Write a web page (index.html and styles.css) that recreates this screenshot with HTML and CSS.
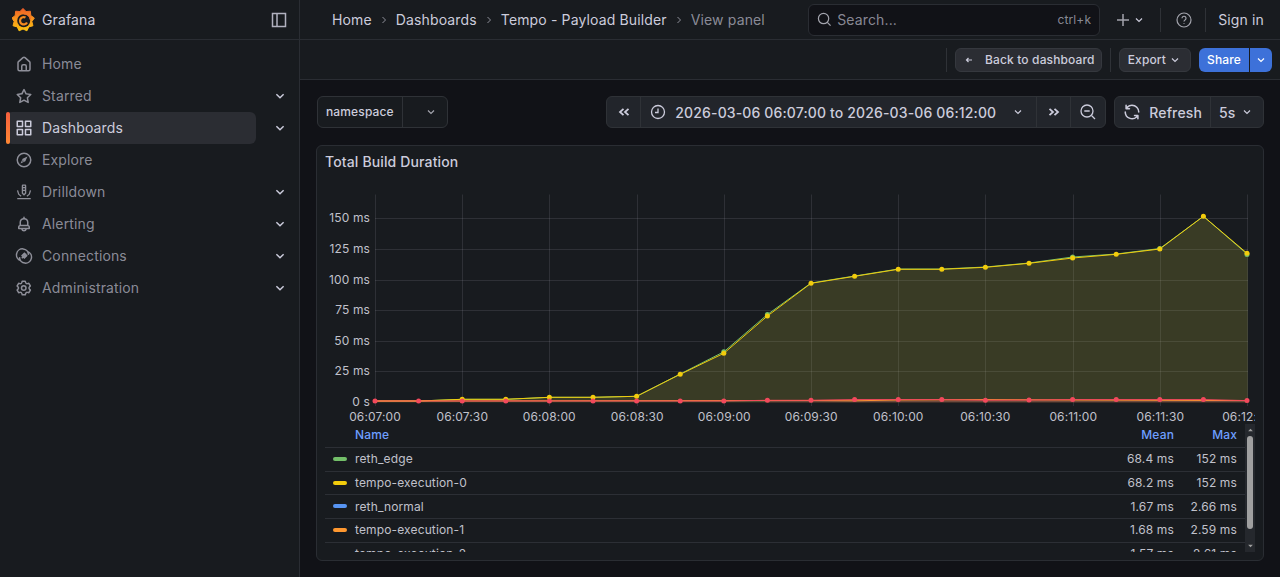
FILE: index.html
```html
<!DOCTYPE html>
<html lang="en">
<head>
<meta charset="utf-8">
<title>Tempo - Payload Builder - View panel</title>
<link rel="stylesheet" href="styles.css">
</head>
<body>
<div class="app">
  <aside class="sidebar">
    <div class="side-head">
      <svg class="logo" viewBox="0 0 24 24"><defs><linearGradient id="lg" gradientUnits="userSpaceOnUse" x1="11" y1="24" x2="11" y2="0"><stop offset="0" stop-color="#fcc60f"/><stop offset=".55" stop-color="#f7941d"/><stop offset="1" stop-color="#f05a28"/></linearGradient></defs>
        <polygon class="logo-gear" points="11,0.5 14.08,3.54 18.39,3.19 18.79,7.5 22.33,10 19.86,13.56 20.96,17.75 16.79,18.89 14.93,22.81 11,21 7.07,22.81 5.21,18.89 1.04,17.75 2.14,13.56 0,10 3.21,7.5 3.61,3.19 7.92,3.54"/>
        <circle class="logo-hole" cx="11.700" cy="12.700" r="6.500"/>
        <path class="logo-arc" d="M13.500 9.500A3.700 3.700 0 1 0 15 14.500"/>
        <path class="logo-curl" d="M11.500 5.800A7 7 0 0 1 18.500 11.500"/>
      </svg>
      <span class="brand">Grafana</span>
      <svg class="dock" viewBox="0 0 16 16"><path d="M1.500 1.500h13v13h-13zM6 1.500v13"/></svg>
    </div>
    <nav class="menu">
      <a class="item"><svg class="ico" viewBox="0 0 24 24"><path d="M20,8h0L14,2.74a3,3,0,0,0-4,0L4,8a3,3,0,0,0-1,2.26V19a3,3,0,0,0,3,3H18a3,3,0,0,0,3-3V10.25A3,3,0,0,0,20,8ZM14,20H10V15a1,1,0,0,1,1-1h2a1,1,0,0,1,1,1Zm5-1a1,1,0,0,1-1,1H16V15a3,3,0,0,0-3-3H11a3,3,0,0,0-3,3v5H6a1,1,0,0,1-1-1V10.25a1,1,0,0,1,.34-.75l6-5.25a1,1,0,0,1,1.32,0l6,5.25a1,1,0,0,1,.34.75Z"/></svg><span class="label">Home</span></a>
      <a class="item"><svg class="ico" viewBox="0 0 24 24"><path d="M22,9.67A1,1,0,0,0,21.14,9l-5.69-.83L12.9,3a1,1,0,0,0-1.8,0L8.55,8.16,2.86,9a1,1,0,0,0-.81.68,1,1,0,0,0,.25,1l4.13,4-1,5.68A1,1,0,0,0,6.9,21.44L12,18.77l5.1,2.67a.93.93,0,0,0,.46.12,1,1,0,0,0,.59-.19,1,1,0,0,0,.4-1l-1-5.68,4.13-4A1,1,0,0,0,22,9.67Zm-6.15,4a1,1,0,0,0-.29.88l.72,4.2-3.76-2a1.06,1.06,0,0,0-.94,0l-3.76,2,.72-4.2a1,1,0,0,0-.29-.88l-3-3,4.21-.61a1,1,0,0,0,.76-.55L12,5.7l1.88,3.82a1,1,0,0,0,.76.55l4.21.61Z"/></svg><span class="label">Starred</span><svg class="chev" viewBox="0 0 10 10"><path d="M2 3.500l3 3 3-3"/></svg></a>
      <a class="item active"><svg class="ico" viewBox="0 0 24 24"><path d="M10,13H3a1,1,0,0,0-1,1v7a1,1,0,0,0,1,1h7a1,1,0,0,0,1-1V14A1,1,0,0,0,10,13ZM9,20H4V15H9ZM21,2H14a1,1,0,0,0-1,1v7a1,1,0,0,0,1,1h7a1,1,0,0,0,1-1V3A1,1,0,0,0,21,2ZM20,9H15V4h5Zm1,4H14a1,1,0,0,0-1,1v7a1,1,0,0,0,1,1h7a1,1,0,0,0,1-1V14A1,1,0,0,0,21,13Zm-1,7H15V15h5ZM10,2H3A1,1,0,0,0,2,3v7a1,1,0,0,0,1,1h7a1,1,0,0,0,1-1V3A1,1,0,0,0,10,2ZM9,9H4V4H9Z"/></svg><span class="label">Dashboards</span><svg class="chev" viewBox="0 0 10 10"><path d="M2 3.500l3 3 3-3"/></svg></a>
      <a class="item"><svg class="ico" viewBox="0 0 24 24"><path fill-rule="evenodd" d="M12 2a10 10 0 1 0 0 20 10 10 0 0 0 0-20zm0 2a8 8 0 1 1 0 16 8 8 0 0 1 0-16zm4.700 3.300l-6.500 2.900-2.900 6.500 6.500-2.900zM10.500 12.300l1.200 1.200-2.100.9z"/></svg><span class="label">Explore</span></a>
      <a class="item"><svg class="ico" viewBox="0 0 24 24"><path d="M9 3.500a1.500 1.500 0 0 1 1.500-1.500h3A1.500 1.500 0 0 1 15 3.500V14l-3 3-3-3zm1.800 0v1.800h2.400V3.500zm0 3.500v2h2.400V7zm0 3.700v2.500l1.200 1.200 1.200-1.200v-2.500zM2.500 10l1.700-.5 1.500 5 3 2.500-1 1.300-3.500-3zM21.500 10l-1.700-.5-1.500 5-3 2.500 1 1.300 3.500-3zM3 20h18v1.800H3z"/></svg><span class="label">Drilldown</span><svg class="chev" viewBox="0 0 10 10"><path d="M2 3.500l3 3 3-3"/></svg></a>
      <a class="item"><svg class="ico" viewBox="0 0 24 24"><path d="M18,13.18V10a6,6,0,0,0-5-5.910V3a1,1,0,0,0-2,0V4.090A6,6,0,0,0,6,10v3.180A3,3,0,0,0,4,16v2a1,1,0,0,0,1,1H8.140a4,4,0,0,0,7.720,0H19a1,1,0,0,0,1-1V16A3,3,0,0,0,18,13.180ZM8,10a4,4,0,0,1,8,0v3H8Zm4,10a2,2,0,0,1-1.720-1h3.440A2,2,0,0,1,12,20Zm6-3H6V16a1,1,0,0,1,1-1H17a1,1,0,0,1,1,1Z"/></svg><span class="label">Alerting</span><svg class="chev" viewBox="0 0 10 10"><path d="M2 3.500l3 3 3-3"/></svg></a>
      <a class="item"><svg class="ico" viewBox="0 0 24 24"><path class="line" d="M18 10.500a8 8 0 1 0-10.500 7.600M6 13.500a8 8 0 1 0 10.500-7.600M9.500 11.500l3-3 3 3-3 3zM9 15l6-6"/></svg><span class="label">Connections</span><svg class="chev" viewBox="0 0 10 10"><path d="M2 3.500l3 3 3-3"/></svg></a>
      <a class="item"><svg class="ico" viewBox="0 0 24 24"><path d="M19.900,12.660a1,1,0,0,1,0-1.320L21.180,9.900a1,1,0,0,0,.12-1.170l-2-3.460a1,1,0,0,0-1.070-.48l-1.880.38a1,1,0,0,1-1.150-.66l-.61-1.830A1,1,0,0,0,13.640,2h-4a1,1,0,0,0-1,.68L8.080,4.510a1,1,0,0,1-1.150.66L5,4.790A1,1,0,0,0,4,5.270L2,8.730A1,1,0,0,0,2.100,9.900l1.270,1.440a1,1,0,0,1,0,1.320L2.100,14.100A1,1,0,0,0,2,15.270l2,3.460a1,1,0,0,0,1.070.48l1.880-.38a1,1,0,0,1,1.150.66l.61,1.830a1,1,0,0,0,1,.68h4a1,1,0,0,0,.95-.68l.61-1.830a1,1,0,0,1,1.150-.66l1.880.38a1,1,0,0,0,1.070-.48l2-3.460a1,1,0,0,0-.12-1.170ZM18.410,14l.8.900-1.280,2.220-1.180-.24a3,3,0,0,0-3.450,2L12.920,20H10.360L10,18.860a3,3,0,0,0-3.450-2l-1.180.24L4.070,14.890l.8-.9a3,3,0,0,0,0-4l-.8-.9L5.350,6.890l1.180.24a3,3,0,0,0,3.450-2L10.360,4h2.560l.38,1.140a3,3,0,0,0,3.450,2l1.180-.24,1.280,2.220-.8.9A3,3,0,0,0,18.410,14ZM11.640,8a4,4,0,1,0,4,4A4,4,0,0,0,11.640,8Zm0,6a2,2,0,1,1,2-2A2,2,0,0,1,11.640,14Z"/></svg><span class="label">Administration</span><svg class="chev" viewBox="0 0 10 10"><path d="M2 3.500l3 3 3-3"/></svg></a>
    </nav>
  </aside>
  <main class="main">
    <header class="topbar">
      <nav class="crumbs">
        <span>Home</span><svg class="sep" viewBox="0 0 10 10"><path d="M3.500 2l3 3-3 3"/></svg>
        <span>Dashboards</span><svg class="sep" viewBox="0 0 10 10"><path d="M3.500 2l3 3-3 3"/></svg>
        <span>Tempo - Payload Builder</span><svg class="sep" viewBox="0 0 10 10"><path d="M3.500 2l3 3-3 3"/></svg>
        <span class="dim">View panel</span>
      </nav>
      <div class="search">
        <svg class="s-ico" viewBox="0 0 16 16"><circle cx="7" cy="7" r="5.500"/><path d="M11 11l3.500 3.500"/></svg>
        <span class="s-text">Search...</span>
        <span class="s-key">ctrl+k</span>
      </div>
      <div class="plus"><svg class="plus-ico" viewBox="0 0 14 14"><path d="M7 1v12M1 7h12"/></svg><svg class="chev small" viewBox="0 0 10 10"><path d="M2 3.500l3 3 3-3"/></svg></div>
      <i class="vr"></i>
      <svg class="help" viewBox="0 0 16 16"><circle cx="8" cy="8" r="7"/><path d="M6 6.200a2 2 0 1 1 3 1.800c-.7.400-1 .8-1 1.600M8 11.300v.8"/></svg>
      <i class="vr"></i>
      <span class="signin">Sign in</span>
    </header>
    <div class="actionbar">
      <i class="vr bar"></i>
      <div class="btn back"><svg class="arrow" viewBox="0 0 10 10"><path d="M8 5H2.500M4.500 3l-2 2 2 2"/></svg>Back to dashboard</div>
      <i class="vr bar"></i>
      <div class="btn export">Export<svg class="chev small" viewBox="0 0 10 10"><path d="M2 3.500l3 3 3-3"/></svg></div>
      <div class="share"><span class="share-l">Share</span><span class="share-r"><svg class="chev small white" viewBox="0 0 10 10"><path d="M2 3.500l3 3 3-3"/></svg></span></div>
    </div>
    <section class="content">
      <div class="controls">
        <div class="var"><span class="var-l">namespace</span><span class="var-r"><svg class="chev small" viewBox="0 0 10 10"><path d="M2 3.500l3 3 3-3"/></svg></span></div>
        <div class="spacer"></div>
        <div class="group">
          <span class="seg arrows"><svg class="dbl" viewBox="0 0 12 12"><path d="M5.500 2.800L2 6l3.500 3.200M10.500 2.800L7 6l3.500 3.200"/></svg></span>
          <span class="seg range"><svg class="clock" viewBox="0 0 16 16"><circle cx="8" cy="8" r="6.500"/><path d="M8 4.500V8.500H5"/></svg><span class="range-t">2026-03-06 06:07:00 to 2026-03-06 06:12:00</span><svg class="chev small" viewBox="0 0 10 10"><path d="M2 3.500l3 3 3-3"/></svg></span>
          <span class="seg arrows"><svg class="dbl" viewBox="0 0 12 12"><path d="M1.500 2.800L5 6 1.500 9.200M6.500 2.800L10 6l-3.500 3.200"/></svg></span>
          <span class="seg zoomout"><svg class="zo" viewBox="0 0 16 16"><circle cx="7" cy="7" r="6"/><path d="M11.500 11.500l3.500 3.500M4.300 7h5.400"/></svg></span>
        </div>
        <div class="group refresh">
          <span class="seg ref"><svg class="ref-ico" viewBox="0 0 24 24"><path d="M19.910,15.510H15.380a1,1,0,0,0,0,2h2.400A8,8,0,0,1,4,12a1,1,0,0,0-2,0,10,10,0,0,0,16.880,7.230V21a1,1,0,0,0,2,0V16.500A1,1,0,0,0,19.910,15.510ZM12,2A10,10,0,0,0,5.120,4.770V3a1,1,0,0,0-2,0V7.500a1,1,0,0,0,1,1h4.500a1,1,0,0,0,0-2H6.220A8,8,0,0,1,20,12a1,1,0,0,0,2,0A10,10,0,0,0,12,2Z"/></svg>Refresh</span>
          <span class="seg interval">5s<svg class="chev small" viewBox="0 0 10 10"><path d="M2 3.500l3 3 3-3"/></svg></span>
        </div>
      </div>
      <article class="panel">
        <h2 class="panel-title">Total Build Duration</h2>
        <svg class="chart" viewBox="325 178 930 247" width="930" height="247">
          <g class="grid">
            <path d="M375.500 194.500V406M462.500 194.500V406M549.500 194.500V406M637.500 194.500V406M724.500 194.500V406M811.500 194.500V406M898.500 194.500V406M985.500 194.500V406M1073.500 194.500V406M1160.500 194.500V406M1247.500 194.500V406"/>
            <path d="M375 218.500H1248M375 249.500H1248M375 280.500H1248M375 310.500H1248M375 341.500H1248M375 371.500H1248M375 401.500H1248"/>
          </g>
          <polygon class="area" points="375,401 418.600,401 462.200,399.300 505.800,399.300 549.400,397.300 593,397.300 636.600,396.300 680.200,374.300 723.800,353.300 767.400,316 811,283.300 854.600,276.300 898.200,269.300 941.800,269.300 985.400,267.300 1029,263.300 1072.600,258 1116.200,254.300 1159.800,249 1203.400,216.300 1247.800,253.300 1247.800,402.500 375,402.500"/>
          <polygon class="area-red" points="767.400,400.300 854.600,399.600 1203.400,399.600 1247.800,400.600 1247.800,402.500 767.400,402.500"/>
          <polyline class="s green" points="375,401 418.600,401 462.200,399.300 505.800,399.300 549.400,397.300 593,397.300 636.600,396.300 680.200,374 723.800,351.800 767.400,314.500 811,283 854.600,276 898.200,269 941.800,269 985.400,267 1029,263 1072.600,257 1116.200,254 1159.800,248.500 1203.400,216.300 1247,254"/>
          <polyline class="s yellow" points="375,401 418.600,401 462.200,399.300 505.800,399.300 549.400,397.300 593,397.300 636.600,396.300 680.200,374.300 723.800,353.300 767.400,316 811,283.300 854.600,276.300 898.200,269.300 941.800,269.300 985.400,267.300 1029,263.300 1072.600,258 1116.200,254.300 1159.800,249 1203.400,216.300 1247,253.300"/>
          <polyline class="s orange" points="375,401 811,400.500 854.600,400.800 898.200,400 985.400,399.600 1029,399.800 1072.600,400 1247,400.600"/>
          <polyline class="s red" points="375,401 723.800,401 767.400,400.300 811,400.300 854.600,399.600 898.200,399.600 941.800,399.600 985.400,400.200 1029,400 1072.600,399.600 1116.200,399.600 1159.800,399.600 1203.400,399.600 1247,400.600"/>
          <g class="dots green-d">
            <circle cx="723.800" cy="351.800" r="2.500"/><circle cx="767.400" cy="314.500" r="2.500"/><circle cx="1072.600" cy="257" r="2.500"/><circle cx="1159.800" cy="248.500" r="2.500"/><circle cx="1247" cy="254.500" r="2.500"/>
          </g>
          <g class="dots yellow-d">
            <circle cx="462.200" cy="399.300" r="2.500"/><circle cx="505.800" cy="399.300" r="2.500"/><circle cx="549.400" cy="397.300" r="2.500"/><circle cx="593" cy="397.300" r="2.500"/><circle cx="636.600" cy="396.300" r="2.500"/><circle cx="680.200" cy="374.300" r="2.500"/><circle cx="723.800" cy="353.300" r="2.500"/><circle cx="767.400" cy="316" r="2.500"/><circle cx="811" cy="283.300" r="2.500"/><circle cx="854.600" cy="276.300" r="2.500"/><circle cx="898.200" cy="269.300" r="2.500"/><circle cx="941.800" cy="269.300" r="2.500"/><circle cx="985.400" cy="267.300" r="2.500"/><circle cx="1029" cy="263.300" r="2.500"/><circle cx="1072.600" cy="258" r="2.500"/><circle cx="1116.200" cy="254.300" r="2.500"/><circle cx="1159.800" cy="249" r="2.500"/><circle cx="1203.400" cy="216.300" r="2.500"/><circle cx="1247" cy="253.300" r="2.500"/>
          </g>
          <g class="dots red-d">
            <circle cx="375" cy="401" r="2.500"/><circle cx="418.600" cy="401" r="2.500"/><circle cx="462.200" cy="401" r="2.500"/><circle cx="505.800" cy="401" r="2.500"/><circle cx="549.400" cy="401" r="2.500"/><circle cx="593" cy="401" r="2.500"/><circle cx="636.600" cy="401" r="2.500"/><circle cx="680.200" cy="401" r="2.500"/><circle cx="723.800" cy="401" r="2.500"/><circle cx="767.400" cy="400.300" r="2.500"/><circle cx="811" cy="400.300" r="2.500"/><circle cx="854.600" cy="399.600" r="2.500"/><circle cx="898.200" cy="399.600" r="2.500"/><circle cx="941.800" cy="399.600" r="2.500"/><circle cx="985.400" cy="400.200" r="2.500"/><circle cx="1029" cy="400" r="2.500"/><circle cx="1072.600" cy="399.600" r="2.500"/><circle cx="1116.200" cy="399.600" r="2.500"/><circle cx="1159.800" cy="399.600" r="2.500"/><circle cx="1203.400" cy="399.600" r="2.500"/><circle cx="1247" cy="400.600" r="2.500"/>
          </g>
          <g class="ticks-y">
            <text x="370" y="222">150 ms</text><text x="370" y="253">125 ms</text><text x="370" y="284">100 ms</text><text x="370" y="314">75 ms</text><text x="370" y="345">50 ms</text><text x="370" y="375">25 ms</text><text x="370" y="406">0 s</text>
          </g>
          <g class="ticks-x">
            <text x="375" y="421">06:07:00</text><text x="462.300" y="421">06:07:30</text><text x="549.300" y="421">06:08:00</text><text x="637.300" y="421">06:08:30</text><text x="724.300" y="421">06:09:00</text><text x="811.300" y="421">06:09:30</text><text x="898.300" y="421">06:10:00</text><text x="985.300" y="421">06:10:30</text><text x="1073.300" y="421">06:11:00</text><text x="1160.300" y="421">06:11:30</text><text x="1247.300" y="421">06:12:00</text>
          </g>
        </svg>
        <div class="legend">
          <div class="legend-body">
            <div class="lrow head"><span class="n">Name</span><span class="v">Mean</span><span class="v">Max</span></div>
            <div class="lrow"><i class="sw sw-green"></i><span class="n">reth_edge</span><span class="v">68.4 ms</span><span class="v">152 ms</span></div>
            <div class="lrow"><i class="sw sw-yellow"></i><span class="n">tempo-execution-0</span><span class="v">68.2 ms</span><span class="v">152 ms</span></div>
            <div class="lrow"><i class="sw sw-blue"></i><span class="n">reth_normal</span><span class="v">1.67 ms</span><span class="v">2.66 ms</span></div>
            <div class="lrow"><i class="sw sw-orange"></i><span class="n">tempo-execution-1</span><span class="v">1.68 ms</span><span class="v">2.59 ms</span></div>
            <div class="lrow"><i class="sw sw-red"></i><span class="n">tempo-execution-2</span><span class="v">1.57 ms</span><span class="v">2.61 ms</span></div>
          </div>
          <div class="scrollbar">
            <svg class="sb-arrow" viewBox="0 0 10 6"><path d="M5 1l3.500 4h-7z"/></svg>
            <div class="thumb"></div>
            <svg class="sb-arrow" viewBox="0 0 10 6"><path d="M5 5L1.500 1h7z"/></svg>
          </div>
        </div>
      </article>
    </section>
  </main>
</div>
</body>
</html>
```
FILE: styles.css
```css
* { box-sizing: border-box; }
html, body { margin: 0; height: 100%; overflow: hidden; }
body { background: #111217; color: #ccccdc; font: 400 14px/1.5 Inter, "Noto Sans", sans-serif; letter-spacing: 0.01em; }
svg { display: block; flex: none; }
.app { display: flex; height: 577px; }

.sidebar { width: 300px; flex: none; background: #181b1f; border-right: 1px solid #2a2d33; }
.side-head { height: 40px; display: flex; align-items: center; padding: 0 12px; border-bottom: 1px solid #2a2d33; }
.logo { width: 24px; height: 24px; }
.logo-gear { fill: url(#lg); stroke: url(#lg); stroke-width: 1; stroke-linejoin: round; }
.logo-hole { fill: #181b1f; }
.logo-arc { fill: none; stroke: #f68a1f; stroke-width: 2.200; }
.logo-curl { fill: none; stroke: #f0702a; stroke-width: 1.600; }
.brand { margin-left: 6px; color: #ccccdc; }
.dock { width: 16px; height: 16px; margin-left: auto; fill: none; stroke: #ccccdc; stroke-width: 1.500; opacity: .85; }
.menu { display: flex; flex-direction: column; padding-top: 8px; }
.item { display: flex; align-items: center; height: 32px; width: 250px; margin-left: 6px; padding-left: 9px; color: rgba(204,204,220,.65); position: relative; }
.item .ico { width: 18px; height: 18px; fill: #8e8f99; }
.ico .line { fill: none; stroke: #8e8f99; stroke-width: 2; }
.label { margin-left: 9px; margin-top: -2px; }
.chev { width: 12px; height: 12px; fill: none; stroke: #ccccdc; stroke-width: 1.200; }
.item .chev { position: absolute; left: 268px; top: 10px; width: 12px; height: 12px; }
.active { background: #2b2d33; color: #ccccdc; border-radius: 6px; }
.active::before { content: ""; position: absolute; left: 0; top: 0; bottom: 0; width: 4px; border-radius: 2px; background: linear-gradient(#f55f3e, #ff8833); }
.active .ico { fill: #ccccdc; }

.main { flex: 1; min-width: 0; display: flex; flex-direction: column; }
.topbar { height: 40px; flex: none; background: #181b1f; border-bottom: 1px solid #2a2d33; display: flex; align-items: center; padding: 0 16px 0 32px; }
.crumbs { display: flex; align-items: center; color: #ccccdc; flex: 1; }
.sep { width: 10px; height: 10px; margin: 0 7px; fill: none; stroke: #8e8f99; stroke-width: 1; }
.dim { color: rgba(204,204,220,.65); }
.search { width: 292px; height: 32px; margin-right: 16px; display: flex; align-items: center; padding: 0 8px; background: #111217; border: 1px solid #2a2d33; border-radius: 6px; }
.s-ico { width: 15px; height: 15px; fill: none; stroke: #a3a4ad; stroke-width: 1.300; }
.s-text { margin-left: 5px; color: rgba(204,204,220,.65); }
.s-key { margin-left: auto; font-size: 12px; color: rgba(204,204,220,.65); }
.plus { display: flex; align-items: center; gap: 4px; margin-right: 16px; }
.plus-ico { width: 14px; height: 14px; fill: none; stroke: #a3a4ad; stroke-width: 1.500; }
.small { width: 10px; height: 10px; }
.vr { display: block; width: 1px; height: 24px; background: #2f3237; flex: none; }
.help { width: 16px; height: 16px; margin: 0 13px 0 15px; fill: none; stroke: #a3a4ad; stroke-width: 1.200; }
.signin { margin-left: 12px; color: #ccccdc; }

.actionbar { height: 40px; flex: none; background: #181b1f; border-bottom: 1px solid #2a2d33; display: flex; align-items: center; justify-content: flex-end; padding: 0 8px 0 0; }
.bar { margin: 0 8px; }
.btn { height: 24px; display: flex; align-items: center; background: #2b2d33; border: 1px solid #35383e; border-radius: 6px; font-size: 12px; font-weight: 500; color: #ccccdc; }
.back { padding: 0 6px 0 8px; }
.arrow { width: 10px; height: 10px; margin-right: 11px; fill: none; stroke: #ccccdc; stroke-width: 1.200; }
.export { padding: 0 10px 0 8px; gap: 4px; margin-right: 8px; }
.share { display: flex; height: 24px; font-size: 12px; font-weight: 500; color: #fff; gap: 1px; }
.share-l { background: #3d71d9; border-radius: 6px 0 0 6px; padding: 0 8px; display: flex; align-items: center; }
.share-r { background: #3d71d9; border-radius: 0 6px 6px 0; width: 22px; display: flex; align-items: center; justify-content: center; }
.white { stroke: #fff; }

.content { flex: 1; min-height: 0; padding: 16px; display: flex; flex-direction: column; }
.controls { display: flex; height: 32px; flex: none; align-items: stretch; margin-bottom: 17px; }
.spacer { flex: 1; }
.var { display: flex; width: 131px; margin-left: 1px; background: #181b1f; border: 1px solid #2f3237; border-radius: 6px; font-size: 12px; font-weight: 500; }
.var-l { padding: 0 8px; display: flex; align-items: center; border-right: 1px solid #2f3237; width: 85px; }
.var-r { flex: 1; display: flex; align-items: center; justify-content: center; padding-left: 12px; }
.var-r .chev { stroke: #a3a4ad; }
.group { display: flex; background: #22252b; border: 1px solid #2f3237; border-radius: 6px; }
.refresh { margin-left: 8px; }
.seg { display: flex; align-items: center; justify-content: center; border-right: 1px solid #2f3237; font-weight: 500; }
.seg:last-child { border-right: 0; }
.arrows { width: 34px; }
.dbl { width: 12px; height: 12px; fill: none; stroke: #ccccdc; stroke-width: 1.800; }
.range { padding: 0 13px 0 9px; gap: 9px; }
.clock { width: 16px; height: 16px; fill: none; stroke: #ccccdc; stroke-width: 1.300; }
.range-t { white-space: nowrap; }
.range .chev { margin-left: 8px; }
.zoomout { width: 34px; }
.zo { width: 16px; height: 16px; fill: none; stroke: #ccccdc; stroke-width: 1.300; }
.ref { padding: 0 8px; gap: 8px; }
.ref-ico { width: 18px; height: 18px; fill: #ccccdc; }
.interval { width: 52px; padding-left: 8px; gap: 7px; justify-content: flex-start; }

.panel { flex: 1; min-height: 0; background: #181b1f; border: 1px solid #2a2d33; border-radius: 6px; padding: 0 8px; display: flex; flex-direction: column; overflow: hidden; }
.panel-title { margin: 0; height: 32px; flex: none; font-size: 14px; font-weight: 500; line-height: 32px; color: #ccccdc; }
.chart { flex: none; overflow: hidden; }
.grid path { fill: none; stroke: rgba(204,204,220,.12); stroke-width: 1; }
.area { fill: rgba(189,192,66,.2); }
.area-red { fill: rgba(242,73,92,.22); }
.s { fill: none; stroke-width: 1; }
.green { stroke: #73bf69; }
.yellow { stroke: #f2cc0c; }
.orange { stroke: #ff9830; }
.red { stroke: #f2495c; }
.green-d { fill: #73bf69; }
.yellow-d { fill: #f2cc0c; }
.red-d { fill: #f2495c; }
text { font: 400 12px Inter, "Noto Sans", sans-serif; fill: #c0c1cb; letter-spacing: 0.01em; }
.ticks-y text { text-anchor: end; }
.ticks-x text { text-anchor: middle; }

.legend { display: flex; height: 128px; flex: none; margin-top: -1px; }
.legend-body { flex: 1; overflow: hidden; font-size: 12px; }
.lrow { display: flex; align-items: center; height: 23.700px; border-bottom: 1px solid #2c2f35; padding-right: 8px; position: relative; color: #c0c1cb; }
.lrow.head { height: 24px; padding-bottom: 2px; color: #6e9fff; font-weight: 500; }
.n { flex: 1; padding-left: 30px; }
.v { width: 63px; text-align: right; }
.sw { position: absolute; left: 8px; top: 9px; width: 14px; height: 4px; border-radius: 2px; }
.sw-green { background: #73bf69; }
.sw-yellow { background: #f2cc0c; }
.sw-blue { background: #5794f2; }
.sw-orange { background: #ff9830; }
.sw-red { background: #f2495c; }
.scrollbar { width: 10px; flex: none; background: #25282d; display: flex; flex-direction: column; align-items: center; padding-top: 4px; }
.sb-arrow { width: 7px; height: 4px; fill: #a0a0a0; }
.thumb { width: 6px; height: 93px; margin: 4px 0 15px; background: #a0a0a0; border-radius: 3px; }
```
